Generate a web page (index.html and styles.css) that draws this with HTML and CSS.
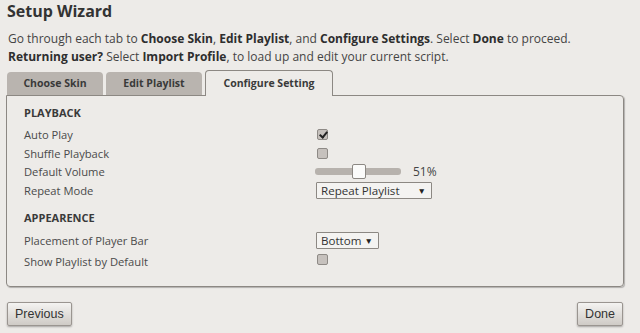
FILE: index.html
```html
<!DOCTYPE html>
<html lang="en">

<head>
  <meta charset="UTF-8" />
  <meta name="viewport" content="width=device-width, initial-scale=1.0" />
  <title>Setup Wizard</title>
  <link rel="stylesheet" href="styles.css">
</head>

<body>

  <h1 class="title">Setup Wizard</h1>

  <p class="intro">
    Go through each tab to <b>Choose Skin</b>, <b>Edit Playlist</b>, and <b>Configure Settings</b>. Select <b>Done</b> to proceed.<br>
    <b>Returning user?</b> Select <b>Import Profile</b>, to load up and edit your current script.
  </p>

  <div class="tabs">
    <div class="tab">Choose Skin</div>
    <div class="tab">Edit Playlist</div>
    <div class="tab active">Configure Setting</div>
  </div>

  <div class="panel">
    <h2 class="section first">PLAYBACK</h2>
    <div class="row">
      <span class="label">Auto Play</span>
      <span class="check checked"></span>
    </div>
    <div class="row">
      <span class="label">Shuffle Playback</span>
      <span class="check"></span>
    </div>
    <div class="row">
      <span class="label">Default Volume</span>
      <span class="volume">
        <span class="track"><span class="thumb"></span></span>
        <span class="value">51%</span>
      </span>
    </div>
    <div class="row">
      <span class="label">Repeat Mode</span>
      <span class="select wide"><span>Repeat Playlist</span><span class="arrow">&#9660;</span></span>
    </div>

    <h2 class="section second">APPEARENCE</h2>
    <div class="row">
      <span class="label">Placement of Player Bar</span>
      <span class="select"><span>Bottom</span><span class="arrow">&#9660;</span></span>
    </div>
    <div class="row tall">
      <span class="label">Show Playlist by Default</span>
      <span class="check"></span>
    </div>
  </div>

  <div class="footer">
    <button class="btn">Previous</button>
    <button class="btn">Done</button>
  </div>

</body>

</html>
```

FILE: styles.css
```css
body {
  margin: 0;
  width: 640px;
  height: 333px;
  overflow: hidden;
  font-family: "Open Sans", sans-serif;
  background-color: #edebe8;
  color: #3f3f3f;
}

.title {
  margin: 0;
  padding: 0 0 0 7px;
  font-size: 16px;
  line-height: 22px;
  font-weight: bold;
  color: #333;
}

.intro {
  margin: 8px 0 0;
  padding-left: 8px;
  font-size: 12px;
  line-height: 18px;
  color: #444;
}

.intro b {
  color: #2e2e2e;
}

/* tab strip */
.tabs {
  display: flex;
  align-items: flex-end;
  gap: 3px;
  margin: 5px 0 0 7px;
  height: 24px;
}

.tab {
  width: 96px;
  height: 23px;
  box-sizing: border-box;
  background-color: #b9b4af;
  border-radius: 4px 4px 0 0;
  font-size: 10.5px;
  font-weight: bold;
  line-height: 23px;
  text-align: center;
  color: #3a3a3a;
}

.tab.active {
  width: 128px;
  height: 26px;
  background-color: #edebe8;
  border: 1px solid #8c8883;
  border-bottom: none;
  position: relative;
  top: 1px;
  z-index: 1;
  line-height: 24px;
}

/* settings panel */
.panel {
  margin: 0 16px 0 6px;
  height: 192px;
  box-sizing: border-box;
  border: 1px solid #8c8883;
  border-radius: 0 4px 4px 4px;
  box-shadow: 1px 1px 1px rgba(0, 0, 0, 0.25);
  padding: 8px 0 0 17px;
}

.section {
  margin: 0;
  font-size: 11px;
  font-weight: bold;
  line-height: 17px;
  color: #3a3a3a;
}

.section.first {
  margin: 0 0 4px;
}

.section.second {
  margin: 9px 0 5px;
}

.row {
  display: grid;
  grid-template-columns: 292px auto;
  align-items: center;
  height: 18.7px;
  font-size: 11.2px;
  color: #4a4a4a;
}

.row.tall {
  height: 20px;
  align-items: end;
}

.row.tall .check {
  margin-bottom: 4px;
}

.check {
  width: 9px;
  height: 9px;
  border: 1px solid #8e8a86;
  border-radius: 2px;
  background-color: #c6c1bd;
  margin-left: 1px;
  position: relative;
}

.check.checked::after {
  content: "";
  position: absolute;
  left: 3px;
  top: 0;
  width: 3px;
  height: 6px;
  border: solid #222;
  border-width: 0 2px 2px 0;
  transform: rotate(40deg);
}

.volume {
  display: flex;
  align-items: center;
  gap: 12px;
}

.track {
  width: 86px;
  height: 7px;
  border-radius: 3px;
  background-color: #b7b2ad;
  position: relative;
  margin-left: -1px;
}

.thumb {
  position: absolute;
  left: 37px;
  top: -4px;
  width: 12px;
  height: 13px;
  background-color: #fbfbfa;
  border: 1px solid #8c8883;
  border-radius: 2px;
}

.value {
  font-size: 12px;
  color: #444;
}

.select {
  display: flex;
  justify-content: space-between;
  align-items: center;
  width: 63px;
  height: 17px;
  box-sizing: border-box;
  padding: 0 5px 0 4px;
  border: 1px solid #8c8883;
  border-radius: 1px;
  background-color: #f4f3f1;
  font-size: 11.6px;
  color: #333;
}

.select.wide {
  width: 116px;
}

.arrow {
  font-size: 8.5px;
  color: #222;
}

/* wizard buttons */
.footer {
  display: flex;
  justify-content: space-between;
  margin: 15px 17px 0 7px;
}

.btn {
  height: 24px;
  padding: 0 7px;
  font-family: "Liberation Sans", Arial, sans-serif;
  font-size: 12.5px;
  color: #333;
  background: linear-gradient(#f4f3f1, #cfcbc6);
  border: 1px solid #9a9590;
  border-radius: 2px;
  box-shadow: 0 1px 2px rgba(0, 0, 0, 0.3);
}
```
